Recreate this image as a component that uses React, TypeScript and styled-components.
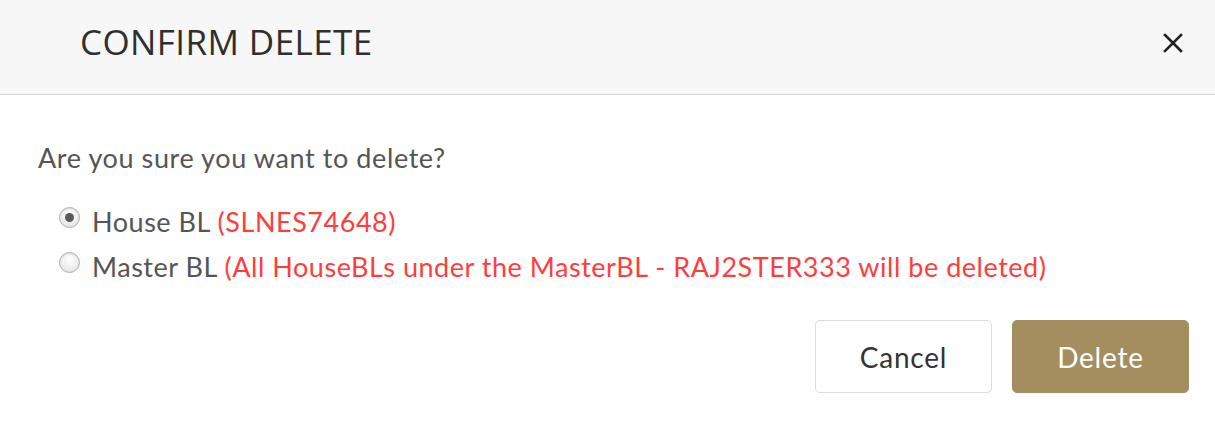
import React, { useState } from "react";
import styled, { createGlobalStyle } from "styled-components";

const Global = createGlobalStyle`
  html, body { margin: 0; padding: 0; background: #ffffff; }
  body { font-family: "Lato", "Open Sans", sans-serif; }
  * { box-sizing: border-box; }
`;

const Modal = styled.div`
  width: 1215px;
  height: 427px;
  background: #ffffff;
  display: flex;
  flex-direction: column;
`;

const Header = styled.div`
  height: 95px;
  flex: none;
  background: #f7f7f7;
  border-bottom: 1px solid #d6d6d6;
  display: flex;
  align-items: center;
  justify-content: space-between;
  padding: 0 30px 0 80px;
`;

const Title = styled.h1`
  margin: 0;
  font-family: "Open Sans", sans-serif;
  font-weight: 400;
  font-size: 35px;
  letter-spacing: 0.4px;
  color: #2f2f2f;
  line-height: 1;
  padding-bottom: 12px;
`;

const Close = styled.button`
  width: 24px;
  height: 24px;
  border: 0;
  background: transparent;
  padding: 0;
  margin-bottom: 8px;
  display: flex;
  align-items: center;
  justify-content: center;
  cursor: pointer;
`;

const Body = styled.div`
  padding: 47px 26px 0 38px;
  display: flex;
  flex-direction: column;
`;

const Question = styled.p`
  margin: 0;
  font-size: 27px;
  line-height: 32px;
  letter-spacing: 0.6px;
  color: #555555;
`;

const Options = styled.div`
  margin-top: 30px;
  padding-left: 21px;
  display: flex;
  flex-direction: column;
  gap: 9px;
`;

const OptionRow = styled.label`
  display: flex;
  align-items: flex-start;
  gap: 12px;
  font-size: 27px;
  line-height: 36px;
  letter-spacing: 0.53px;
  color: #555555;
  cursor: pointer;
`;

const RadioCircle = styled.span<{ $checked: boolean }>`
  width: 21px;
  height: 21px;
  margin-top: 3px;
  border-radius: 50%;
  flex: none;
  border: 1px solid #adadad;
  background: radial-gradient(circle at 50% 35%, #ffffff 0%, #eaeaea 65%, #d6d6d6 100%);
  box-shadow: inset 0 1px 1px rgba(0, 0, 0, 0.1);
  display: flex;
  align-items: center;
  justify-content: center;
  &::after {
    content: "";
    width: 9px;
    height: 9px;
    border-radius: 50%;
    background: #5a5a5a;
    display: ${(p) => (p.$checked ? "block" : "none")};
  }
`;

const Note = styled.span`
  color: #ff3d3d;
`;

const Actions = styled.div`
  margin-top: 35px;
  display: flex;
  justify-content: flex-end;
  gap: 20px;
`;

const Button = styled.button<{ $primary?: boolean }>`
  width: 177px;
  height: 73px;
  border-radius: 5px;
  font-family: "Lato", "Open Sans", sans-serif;
  font-size: 28px;
  letter-spacing: 0.8px;
  cursor: pointer;
  border: 1px solid ${(p) => (p.$primary ? "#a48e60" : "#dcdcdc")};
  background: ${(p) => (p.$primary ? "#a48e60" : "#ffffff")};
  color: ${(p) => (p.$primary ? "#ffffff" : "#333333")};
`;

export default function App() {
  const [choice, setChoice] = useState<"house" | "master">("house");
  return (
    <>
      <Global />
      <Modal>
        <Header>
          <Title>CONFIRM DELETE</Title>
          <Close aria-label="Close">
            <svg width="20" height="20" viewBox="0 0 20 20">
              <path d="M2 2 L18 18 M18 2 L2 18" stroke="#222" strokeWidth="2.6" strokeLinecap="square" />
            </svg>
          </Close>
        </Header>
        <Body>
          <Question>Are you sure you want to delete?</Question>
          <Options>
            <OptionRow onClick={() => setChoice("house")}>
              <RadioCircle $checked={choice === "house"} />
              <span>
                House BL <Note>(SLNES74648)</Note>
              </span>
            </OptionRow>
            <OptionRow onClick={() => setChoice("master")}>
              <RadioCircle $checked={choice === "master"} />
              <span>
                Master BL <Note>(All HouseBLs under the MasterBL - RAJ2STER333 will be deleted)</Note>
              </span>
            </OptionRow>
          </Options>
          <Actions>
            <Button>Cancel</Button>
            <Button $primary>Delete</Button>
          </Actions>
        </Body>
      </Modal>
    </>
  );
}
